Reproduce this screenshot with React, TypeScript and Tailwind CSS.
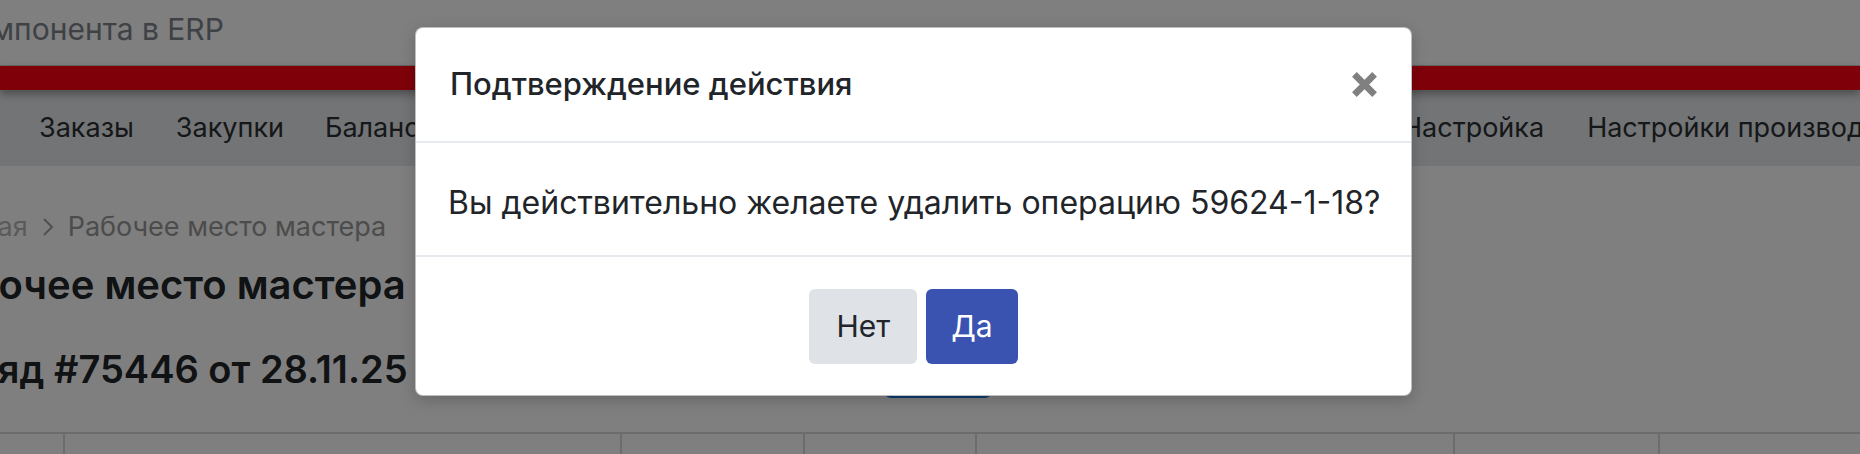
import React from "react";

const font = { fontFamily: "Inter, 'Noto Sans', sans-serif" };

function TopBar() {
  return (
    <div className="flex h-[66px] items-center overflow-hidden border-b border-[#d0d0d0] bg-white pb-[6px]">
      <span className="-ml-[9px] whitespace-nowrap text-[30px] text-[#7d828a]">мпонента в ERP</span>
    </div>
  );
}

function NavBar() {
  const hidden = ["Баланс", "Склад", "Производство", "Планирование", "Отчеты", "Справочники"];
  return (
    <div className="relative">
      <div className="relative z-10 h-[24px] bg-[#fe0012] shadow-[0_4px_8px_rgba(0,0,0,0.35)]" />
      <div className="flex h-[76px] items-center overflow-hidden bg-[#e6e8ec] pl-[39px] text-[27px] text-[#2b2f33]">
        <span className="whitespace-nowrap">Заказы</span>
        <span className="ml-[42px] whitespace-nowrap">Закупки</span>
        <div className="ml-[41px] flex w-[1036px] shrink-0 gap-[41px] overflow-hidden">
          {hidden.map((item) => (
            <span key={item} className="whitespace-nowrap">
              {item}
            </span>
          ))}
        </div>
        <span className="ml-[41px] whitespace-nowrap">Настройка</span>
        <span className="ml-[43px] whitespace-nowrap">Настройки производства</span>
      </div>
    </div>
  );
}

function PageBody() {
  return (
    <div className="overflow-hidden bg-white">
      <div className="mt-[41px] flex h-[40px] items-center whitespace-nowrap text-[27px]">
        <span className="-ml-[80px] text-[#b4b4b4]">Главная</span>
        <span className="mx-[14px] text-[#9a9a9a]">
          <svg width="12" height="20" viewBox="0 0 12 20" fill="none">
            <path d="M2 2l8 8-8 8" stroke="#a0a0a0" strokeWidth="2" />
          </svg>
        </span>
        <span className="text-[#989898]">Рабочее место мастера</span>
      </div>
      <div className="mt-[13px] flex h-[50px] items-center whitespace-nowrap">
        <h1 className="-ml-[74px] text-[40px] font-semibold text-[#222529]">Рабочее место мастера</h1>
      </div>
      <div className="mt-[30px] flex h-[58px] items-center whitespace-nowrap">
        <h2 className="-ml-[76px] text-[38px] font-semibold text-[#222529]">Наряд #75446 от 28.11.25</h2>
        <button className="ml-[477px] h-full w-[106px] rounded-md bg-[#1778dc]" />
      </div>
      <div className="mt-[34px] grid h-[30px] grid-cols-[63px_557px_183px_172px_478px_205px_1fr] border-t-2 border-[#d6d8db]">
        <div />
        <div className="border-l-2 border-[#d6d8db]" />
        <div className="border-l-2 border-[#d6d8db]" />
        <div className="border-l-2 border-[#d6d8db]" />
        <div className="border-l-2 border-[#d6d8db]" />
        <div className="border-l-2 border-[#d6d8db]" />
        <div className="border-l-2 border-[#d6d8db]" />
      </div>
    </div>
  );
}

function CloseIcon() {
  return (
    <svg width="25" height="25" viewBox="0 0 25 25">
      <path d="M2.4 2.4L22.6 22.6M22.6 2.4L2.4 22.6" stroke="#808080" strokeWidth="6.6" />
    </svg>
  );
}

function ConfirmModal() {
  return (
    <div className="absolute left-[415px] top-[27px] z-30 flex h-[369px] w-[997px] flex-col rounded-[8px] border border-black/25 bg-white shadow-[0_4px_16px_rgba(0,0,0,0.2)]">
      <div className="flex h-[113px] items-center justify-between pl-[34px] pr-[34px]">
        <h5 className="text-[31px] font-medium text-[#212529]">Подтверждение действия</h5>
        <CloseIcon />
      </div>
      <div className="h-[2px] bg-[#e7eaee]" />
      <div className="flex h-[112px] items-center pl-[32px] pt-[8px]">
        <p className="text-[32px] text-[#212529]">Вы действительно желаете удалить операцию 59624-1-18?</p>
      </div>
      <div className="h-[2px] bg-[#e7eaee]" />
      <div className="flex flex-1 items-center justify-center gap-[9px]">
        <button className="h-[75px] rounded-[6px] bg-[#dfe2e7] px-[27px] text-[30px] text-[#212529]">Нет</button>
        <button className="h-[75px] rounded-[6px] bg-[#3a53b0] px-[25px] text-[30px] text-white">Да</button>
      </div>
    </div>
  );
}

export default function App() {
  return (
    <div className="relative h-[454px] w-[1860px] overflow-hidden bg-white" style={font}>
      <TopBar />
      <NavBar />
      <PageBody />
      <div className="absolute inset-0 z-20 bg-black/50" />
      <ConfirmModal />
    </div>
  );
}
